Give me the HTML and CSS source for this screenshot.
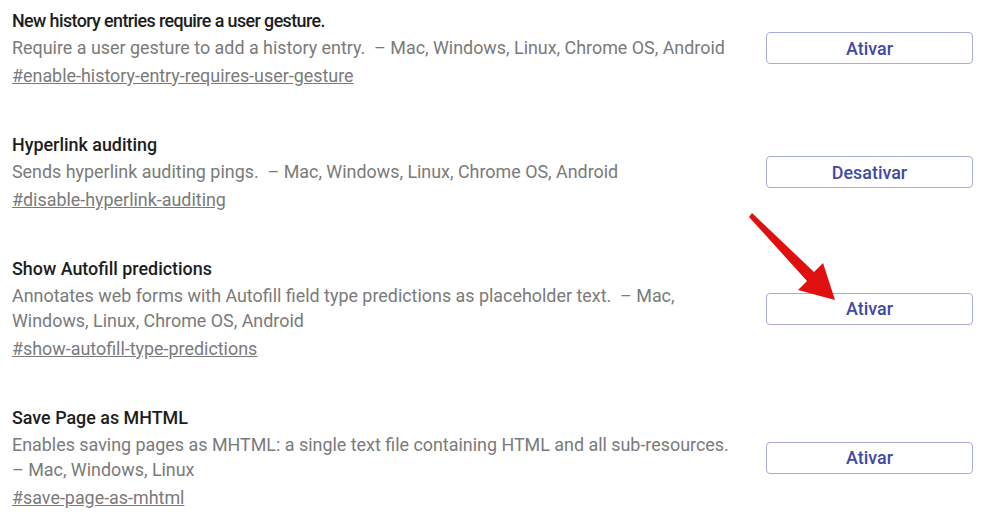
FILE: index.html
```html
<!DOCTYPE html>
<html lang="pt">
<head>
<meta charset="utf-8">
<title>Flags</title>
<link rel="stylesheet" href="styles.css">
</head>
<body>
<div class="page">
  <div class="entry">
    <div class="info">
      <div class="title title-tight">New history entries require a user gesture.</div>
      <div class="desc">Require a user gesture to add a history entry.&nbsp; –&nbsp;Mac, Windows, Linux, Chrome OS, Android</div>
      <a class="link" href="#">#enable-history-entry-requires-user-gesture</a>
    </div>
    <button class="btn">Ativar</button>
  </div>
  <div class="entry">
    <div class="info">
      <div class="title">Hyperlink auditing</div>
      <div class="desc">Sends hyperlink auditing pings.&nbsp; –&nbsp;Mac, Windows, Linux, Chrome OS, Android</div>
      <a class="link" href="#">#disable-hyperlink-auditing</a>
    </div>
    <button class="btn">Desativar</button>
  </div>
  <div class="entry">
    <div class="info">
      <div class="title">Show Autofill predictions</div>
      <div class="desc">Annotates web forms with Autofill field type predictions as placeholder text.&nbsp; –&nbsp;Mac, Windows, Linux, Chrome OS, Android</div>
      <a class="link" href="#">#show-autofill-type-predictions</a>
    </div>
    <button class="btn">Ativar</button>
  </div>
  <div class="entry">
    <div class="info">
      <div class="title">Save Page as MHTML</div>
      <div class="desc">Enables saving pages as MHTML: a single text file containing HTML and all sub-resources.&nbsp; –&nbsp;Mac, Windows, Linux</div>
      <a class="link" href="#">#save-page-as-mhtml</a>
    </div>
    <button class="btn">Ativar</button>
  </div>
  <svg class="arrow" width="100" height="100" viewBox="0 0 100 100">
    <path d="M6 5 L68 64 L77 55 L89 92 L52 82 L61 73 L3 9 Z" fill="#e01010"/>
  </svg>
</div>
</body>
</html>
```

FILE: styles.css
```css
html, body {
  margin: 0;
  padding: 0;
  background: #ffffff;
}
.page {
  position: relative;
  padding: 8px 11px 0 12px;
  font-family: Roboto, "Liberation Sans", sans-serif;
  font-size: 17.9px;
}
.entry {
  display: flex;
  align-items: center;
  justify-content: space-between;
  margin-bottom: 44px;
}
.info {
  width: 735px;
  display: flex;
  flex-direction: column;
  align-items: flex-start;
}
.title {
  color: #1d1d1d;
  font-weight: 500;
  line-height: 25px;
  margin-bottom: 2px;
}
.title-tight {
  letter-spacing: -0.6px;
}
.desc {
  color: #7a7a7a;
  line-height: 25px;
}
.link {
  color: #7a7a7a;
  line-height: 25px;
  margin-top: 3px;
  text-decoration: underline;
}
.btn {
  width: 207px;
  height: 32px;
  border: 1px solid #a7acd6;
  border-radius: 4px;
  background: #ffffff;
  color: #3f4aa3;
  font-family: Roboto, "Liberation Sans", sans-serif;
  font-size: 17.9px;
  font-weight: 500;
  padding: 0;
}
.arrow {
  position: absolute;
  left: 746px;
  top: 208px;
}
```
